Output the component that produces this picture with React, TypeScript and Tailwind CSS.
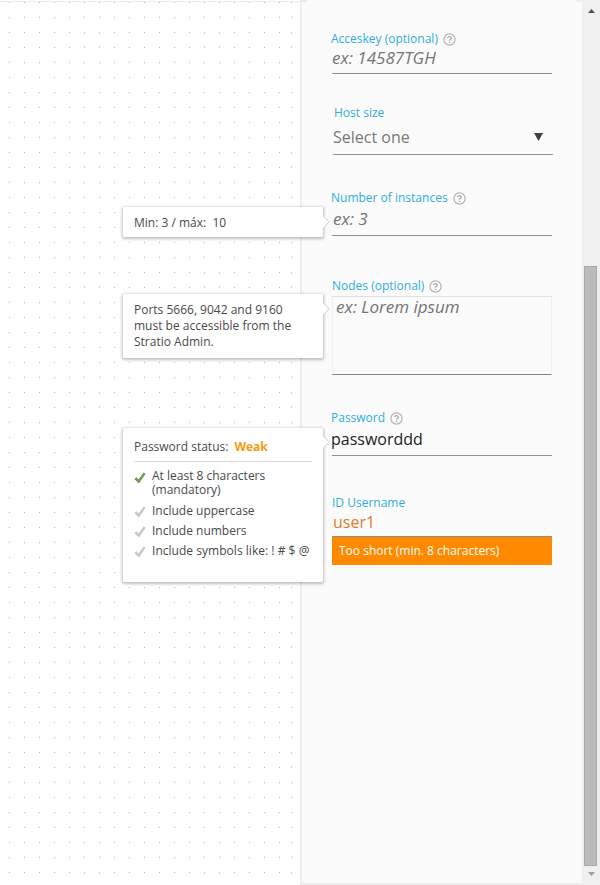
import type { ReactNode } from "react";

function HelpIcon() {
  return (
    <svg width="13" height="13" viewBox="0 0 13 13" fill="none" className="mt-[2px] shrink-0 self-start">
      <circle cx="6.5" cy="6.5" r="5.6" stroke="#b3b3b3" strokeWidth="1.2" />
      <path d="M4.7 5.1C4.7 3.1 8.3 3.1 8.3 5.1C8.3 6.3 6.5 6.3 6.5 7.7" stroke="#a8a8a8" strokeWidth="1.3" />
      <path d="M6.5 8.7V10" stroke="#a8a8a8" strokeWidth="1.4" />
    </svg>
  );
}

function Check({ done }: { done?: boolean }) {
  return (
    <svg width="12" height="12" viewBox="0 0 12 12" className="shrink-0">
      <path d="M0.3 7L2.4 5.2L4.5 7.6L9.6 0.6L11.6 1.8L5 11.6Z" fill={done ? "#709a55" : "#c8c8c8"} />
    </svg>
  );
}

function Label({ children, help }: { children: ReactNode; help?: boolean }) {
  return (
    <div className="flex h-4 items-center gap-[5px] text-[12px] leading-4 whitespace-nowrap text-[#31ade0]">
      <span>{children}</span>
      {help && <HelpIcon />}
    </div>
  );
}

function Tip({ className, children }: { className: string; children: ReactNode }) {
  return (
    <div className={`absolute z-10 w-[200px] rounded-[1px] bg-white px-[11px] text-[12px] text-[#4a4a4a] shadow-[0_1px_3px_1px_rgba(0,0,0,0.25)] ${className}`}>
      {children}
    </div>
  );
}

function TipArrow({ className }: { className: string }) {
  return (
    <svg width="8" height="14" viewBox="0 0 8 14" className={`absolute z-20 ${className}`}>
      <path d="M0 1L6 7L0 13Z" fill="#fff" />
      <path d="M1 1.5L6 6.8L1 12.5" fill="none" stroke="#cfcfcf" strokeWidth="1" />
    </svg>
  );
}

export default function App() {
  return (
    <div className="relative flex h-[885px] w-[600px] overflow-hidden bg-white font-['Open_Sans',sans-serif]">
      <div className="h-full w-[300px] border-t border-white">
        <svg width="300" height="884" className="block">
          <defs>
            <pattern id="dots" width="15" height="15" patternUnits="userSpaceOnUse" x="9" y="1">
              <rect width="1" height="1" fill="#b0b0b0" />
            </pattern>
          </defs>
          <rect width="285" height="884" fill="url(#dots)" />
          <rect width="15" height="884" transform="translate(282 0)" fill="url(#dots)" />
          <rect width="300" height="1" fill="#ebebeb" />
        </svg>
      </div>

      <div className="h-full w-[282px] border-b-2 border-l-2 border-[#efefef] bg-[#fbfbfb] pl-[29px]">
        <div className="ml-px w-[220px] pt-[31px]">
          <div className="relative -left-px"><Label help>Acceskey (optional)</Label></div>
          <div className="h-[27px] border-b border-[#929292] text-[17px] leading-[22px] text-[#747474] italic">ex: 14587TGH</div>
        </div>

        <div className="ml-[2px] mt-[31px] w-[220px]">
          <div className="pl-px"><Label>Host size</Label></div>
          <div className="flex h-[34px] items-start justify-between border-b border-[#929292] pr-[10px] text-[16px] leading-8 text-[#777]">
            <span>Select one</span>
            <svg width="9" height="8" viewBox="0 0 9 8" className="mt-[12px]">
              <path d="M0 0H9L4.5 8Z" fill="#404040" />
            </svg>
          </div>
        </div>

        <div className="relative ml-px mt-[35px] w-[220px]">
          <div className="relative -left-px"><Label help>Number of instances</Label></div>
          <div className="h-[30px] border-b border-[#929292] pl-px text-[17px] leading-[25px] text-[#747474] italic">ex: 3</div>
          <Tip className="top-[17px] left-[-209px] h-[30px] leading-[31px] whitespace-pre">{"Min: 3 / máx:  10"}</Tip>
          <TipArrow className="top-[25px] left-[-9px]" />
        </div>

        <div className="relative ml-px mt-[42px] w-[220px]">
          <Label help>Nodes (optional)</Label>
          <div className="mt-[2px] h-[79px] border border-[#f0f0f0] border-b-[#858585] border-t-[#dfdfdf] pl-[3px] text-[17px] leading-5 text-[#747474] italic">ex: Lorem ipsum</div>
          <Tip className="top-[16px] left-[-209px] h-[64px] pt-2 leading-4">
            Ports 5666, 9042 and 9160<br />must be accessible from the<br />Stratio Admin.
          </Tip>
          <TipArrow className="top-[24px] left-[-9px]" />
        </div>

        <div className="relative ml-px mt-[35px] w-[220px]">
          <div className="relative -left-px"><Label help>Password</Label></div>
          <div className="h-[30px] border-b border-[#929292] text-[16px] leading-[27px] text-[#222]"><span className="-ml-px">passworddd</span></div>
          <Tip className="top-[18px] left-[-209px] h-[154px]">
            <div className="flex h-[34px] w-[177px] gap-[6px] border-b border-[#d8d8d8] pt-[3px] leading-8">
              <span>Password status:</span>
              <span className="font-bold text-[#f39c12]">Weak</span>
            </div>
            <ul className="whitespace-nowrap">
              <li className="mt-[7px] flex gap-[6px] leading-[14px]"><span className="pt-[3px]"><Check done /></span><span>At least 8 characters<br />(mandatory)</span></li>
              <li className="mt-[4px] flex h-5 gap-[6px] leading-5"><span className="pt-[5px]"><Check /></span><span>Include uppercase</span></li>
              <li className="flex h-5 gap-[6px] leading-5"><span className="pt-[5px]"><Check /></span><span>Include numbers</span></li>
              <li className="flex h-5 gap-[6px] leading-5"><span className="pt-[5px]"><Check /></span><span className="tracking-[0.03px]">Include symbols like: ! # $ @</span></li>
            </ul>
          </Tip>
          <TipArrow className="top-[25px] left-[-9px]" />
        </div>

        <div className="ml-px mt-[39px] w-[220px]">
          <Label>ID Username</Label>
          <div className="h-[26px] border-b border-[#8c8c8c] pl-px text-[16px] leading-[23px] text-[#dd7b2c]">user1</div>
          <div className="h-[28px] bg-[#ff8a00] pl-[7px] text-[12px] leading-[28px] text-white">Too short (min. 8 characters)</div>
        </div>
      </div>

      <div className="flex h-full w-[18px] flex-col items-center bg-[#f0f0f0]">
        <svg width="7" height="4" viewBox="0 0 7 4" className="mt-[9px] shrink-0"><path d="M3.5 0L7 4H0Z" fill="#505050" /></svg>
        <div className="mt-[253px] -ml-px h-[600px] w-[13px] shrink-0 border border-[#a8a8a8] bg-[#bcbcbc]" />
        <svg width="7" height="4" viewBox="0 0 7 4" className="mt-[6px] shrink-0"><path d="M0 0H7L3.5 4Z" fill="#a0a0a0" /></svg>
      </div>

      <div className="absolute top-0 left-[300px] h-[2px] w-[7px] bg-[#ececec]" />
      <div className="absolute top-0 left-[576px] h-[2px] w-[6px] bg-[#efefef]" />
    </div>
  );
}
